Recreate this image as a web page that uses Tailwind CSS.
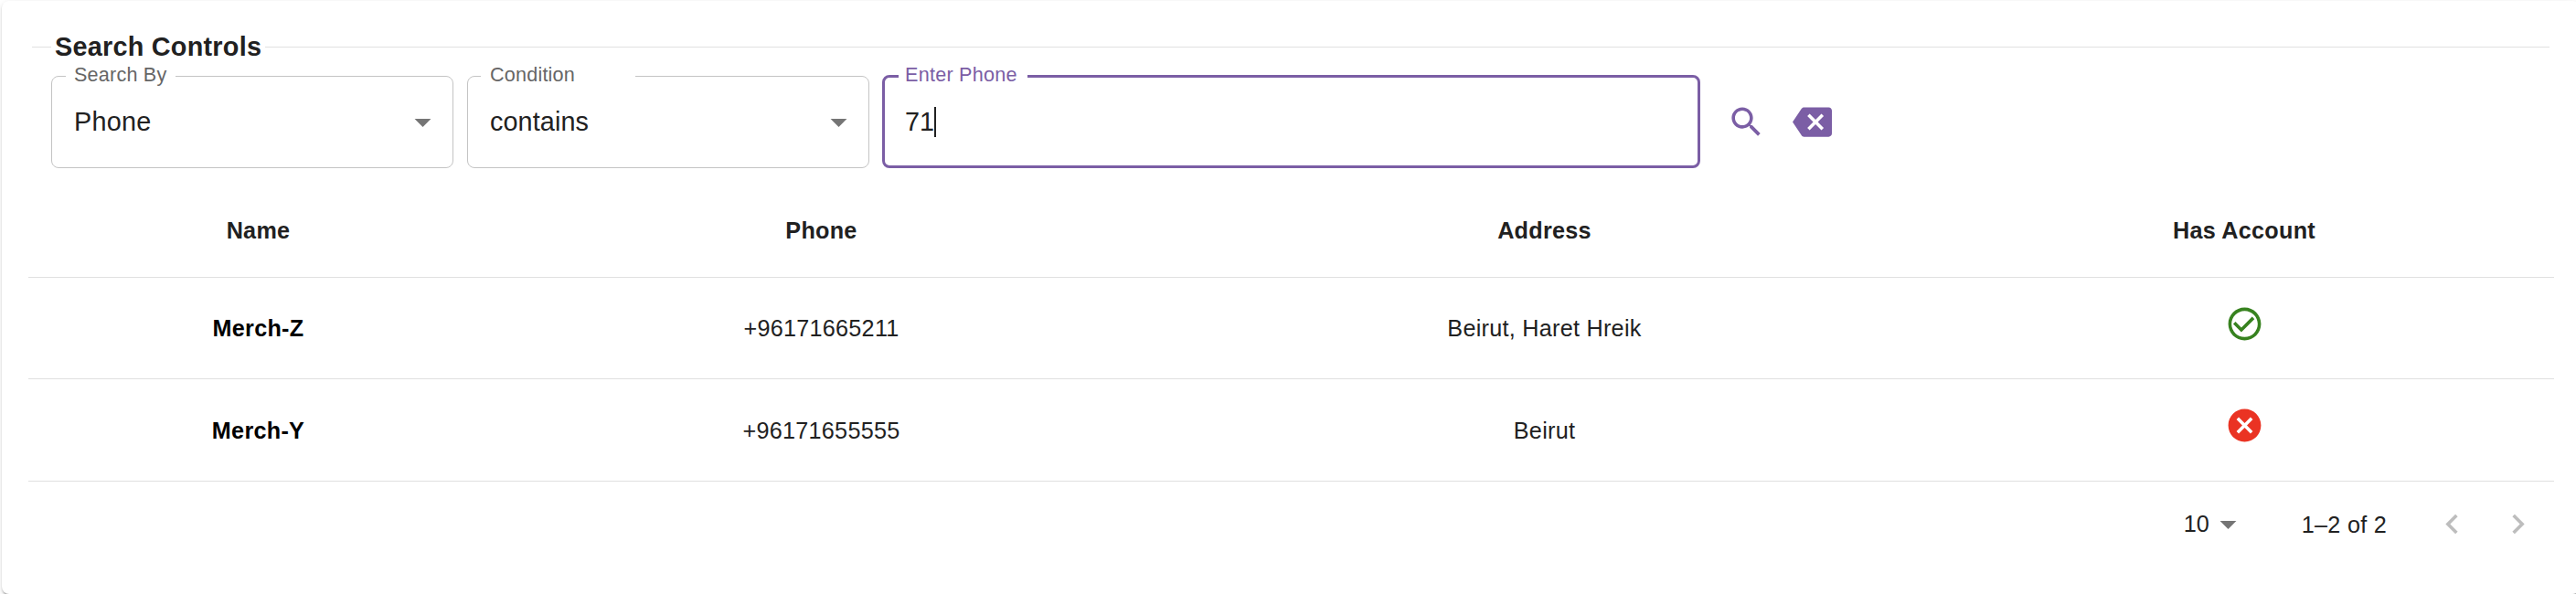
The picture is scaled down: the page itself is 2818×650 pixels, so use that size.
<!DOCTYPE html>
<html lang="en">
<head>
<meta charset="utf-8">
<title>Merchants</title>
<script src="https://cdn.jsdelivr.net/npm/@tailwindcss/browser@4"></script>
</head>
<body class="h-[650px] overflow-hidden bg-white font-['Liberation_Sans',Arial,sans-serif] text-[#212121]">
<main class="ml-0.5 mt-px flex h-[649px] w-[2820px] flex-col rounded-lg bg-white pl-[29px] pr-[28px] shadow-[0_4px_2px_-2px_rgba(0,0,0,0.2),0_2px_2px_0_rgba(0,0,0,0.14),0_2px_6px_0_rgba(0,0,0,0.12)]">

  <!-- Search controls -->
  <section class="h-[191px] pt-[30px]">
    <div class="ml-1 flex h-10 items-center">
      <div class="h-px w-[21px] bg-[#e0e0e0]"></div>
      <h2 class="w-[234px] whitespace-nowrap pl-1 text-[28.8px] leading-10 font-bold tracking-[0.25px]">Search Controls</h2>
      <div class="mr-[5px] h-px flex-1 bg-[#e0e0e0]"></div>
    </div>
    <div class="ml-[25px] mt-[11px] flex items-start">
      <div class="relative mt-px mr-[15px] flex h-[101px] w-[440px] items-center justify-between pl-[25px] pr-3">
        <fieldset class="absolute inset-x-0 -top-[10px] bottom-0 rounded-lg border border-[#c4c4c4] pl-[15px]"><legend class="h-5 w-[120px]"></legend></fieldset>
        <label class="absolute left-[25px] -top-[15px] whitespace-nowrap text-[21.6px] leading-7 tracking-[0.2px] text-[#666]">Search By</label>
        <span class="pb-0.5 text-[28.8px] leading-10 tracking-[0.27px]">Phone</span>
        <svg class="size-[43px]" viewBox="0 0 24 24" fill="#757575"><path d="M7 10l5 5 5-5z"/></svg>
      </div>
      <div class="relative mt-px mr-[14px] flex h-[101px] w-[440px] items-center justify-between pl-[25px] pr-3">
        <fieldset class="absolute inset-x-0 -top-[10px] bottom-0 rounded-lg border border-[#c4c4c4] pl-[14px]"><legend class="h-5 w-[169px]"></legend></fieldset>
        <label class="absolute left-[25px] -top-[15px] whitespace-nowrap text-[21.6px] leading-7 tracking-[0.2px] text-[#666]">Condition</label>
        <span class="pb-0.5 text-[28.8px] leading-10 tracking-[0.1px]">contains</span>
        <svg class="size-[43px]" viewBox="0 0 24 24" fill="#757575"><path d="M7 10l5 5 5-5z"/></svg>
      </div>
      <div class="relative flex h-[102px] w-[895px] items-center pl-[25px]">
        <fieldset class="absolute inset-x-0 -top-[9px] bottom-0 rounded-lg border-3 border-[#7b5ea5] pl-[15px]"><legend class="h-5 w-[141px]"></legend></fieldset>
        <label class="absolute left-[25px] -top-[14px] whitespace-nowrap text-[21.6px] leading-7 tracking-[0.25px] text-[#7b5ea5]">Enter Phone</label>
        <span class="pb-px text-[28.8px] leading-10">71</span>
        <span class="h-[33px] w-0.5 bg-[#212121]"></span>
      </div>
      <div class="ml-[29px] flex h-[102px] items-center gap-[29px]">
        <svg class="size-[43px]" viewBox="0 0 24 24" fill="#7b5ea5"><path d="M15.5 14h-.79l-.28-.27C15.41 12.59 16 11.11 16 9.5 16 5.91 13.09 3 9.5 3S3 5.91 3 9.5 5.91 16 9.5 16c1.61 0 3.09-.59 4.23-1.57l.27.28v.79l5 4.99L20.49 19l-4.99-5zm-6 0C7.01 14 5 11.99 5 9.5S7.01 5 9.5 5 14 7.01 14 9.5 11.99 14 9.5 14z"/></svg>
        <svg class="size-[43px]" viewBox="0 0 24 24" fill="#7b5ea5"><path d="M22 3H7c-.69 0-1.23.35-1.59.88L0 12l5.41 8.11c.36.53.9.89 1.59.89h15c1.1 0 2-.9 2-2V5c0-1.1-.9-2-2-2zm-3 12.59L17.59 17 14 13.41 10.41 17 9 15.59 12.59 12 9 8.41 10.41 7 14 10.59 17.59 7 19 8.41 15.41 12 19 15.59z"/></svg>
      </div>
    </div>
  </section>

  <!-- Results -->
  <table class="mt-[9px] w-[2763px] table-fixed border-separate border-spacing-0 text-center text-[25.2px] leading-9 tracking-[0.27px] [&_td]:border-b [&_td]:border-[#e0e0e0] [&_td]:p-0 [&_th]:border-b [&_th]:border-[#e0e0e0] [&_th]:p-0">
    <colgroup><col class="w-[503px]"><col class="w-[729px]"><col class="w-[853px]"><col class="w-[678px]"></colgroup>
    <thead>
      <tr class="h-[103px] font-bold"><th>Name</th><th>Phone</th><th>Address</th><th>Has Account</th></tr>
    </thead>
    <tbody>
      <tr class="h-[111px]">
        <th class="text-black">Merch-Z</th><td>+96171665211</td><td>Beirut, Haret Hreik</td>
        <td><svg class="mx-auto mb-[10px] size-[43px]" viewBox="0 0 24 24" fill="#37821f"><path d="M16.59 7.58L10 14.17l-3.59-3.58L5 12l5 5 8-8zM12 2C6.48 2 2 6.48 2 12s4.480 10 10 10 10-4.480 10-10S17.520 2 12 2zm0 18c-4.420 0-8-3.580-8-8s3.580-8 8-8 8 3.580 8 8-3.580 8-8 8z"/></svg></td>
      </tr>
      <tr class="h-[112px]">
        <th class="text-black">Merch-Y</th><td>+96171655555</td><td>Beirut</td>
        <td><svg class="mx-auto mb-[10px] size-[43px]" viewBox="0 0 24 24" fill="#ea3323"><path d="M12 2C6.470 2 2 6.470 2 12s4.470 10 10 10 10-4.470 10-10S17.530 2 12 2zm5 13.590L15.590 17 12 13.410 8.410 17 7 15.590 10.590 12 7 8.410 8.410 7 12 10.590 15.590 7 17 8.410 13.410 12 17 15.590z"/></svg></td>
      </tr>
    </tbody>
  </table>

  <!-- Pagination -->
  <div class="flex h-[92px] items-center justify-end pr-[18px] text-[25.2px] leading-9">
    <span class="pb-px">10</span>
    <svg class="ml-[-1px] size-[43px]" viewBox="0 0 24 24" fill="#757575"><path d="M7 10l5 5 5-5z"/></svg>
    <span class="ml-[59px] mt-px tracking-[0.27px]">1–2 of 2</span>
    <svg class="ml-[50px] size-[43px]" viewBox="0 0 24 24" fill="#bdbdbd"><path d="M15.41 16.59L10.83 12l4.580-4.590L14 6l-6 6 6 6 1.410-1.410z"/></svg>
    <svg class="ml-[29px] size-[43px]" viewBox="0 0 24 24" fill="#bdbdbd"><path d="M8.590 16.590L13.170 12 8.590 7.410 10 6l6 6-6 6-1.410-1.410z"/></svg>
  </div>
</main>
</body>
</html>
